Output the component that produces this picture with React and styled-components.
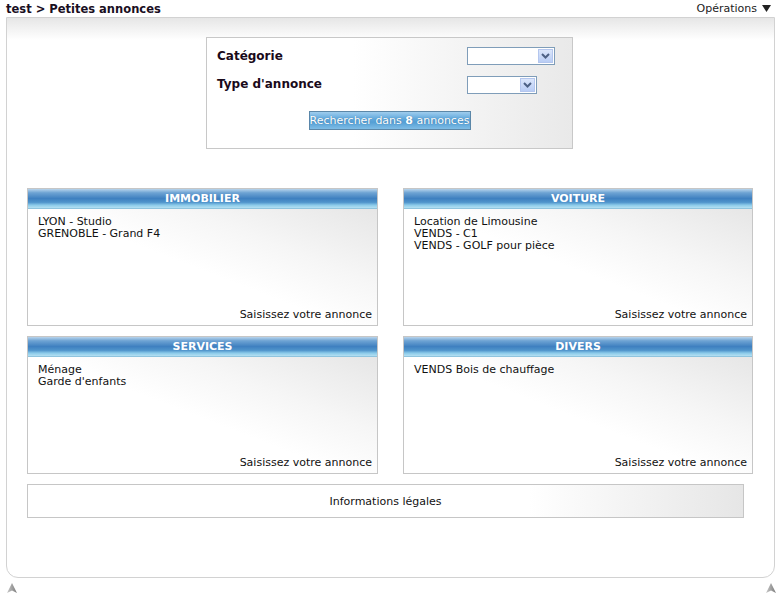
import * as React from "react";
import styled, { createGlobalStyle } from "styled-components";

const GlobalStyle = createGlobalStyle`
  html, body {
    margin: 0;
    padding: 0;
    background: #fff;
  }
  body {
    font-family: "DejaVu Sans", Verdana, sans-serif;
    font-size: 11px;
    color: #000;
  }
`

const Page = styled.div`
  width: 781px;
  height: 599px;
  position: relative;
  overflow: hidden;
`

const TitleBar = styled.div`
  height: 17px;
  display: flex;
  align-items: center;
  justify-content: space-between;
  padding: 0 10px 0 6px;
`

const Breadcrumb = styled.div`
  font-weight: bold;
  font-size: 11.5px;
  color: #1a0f1f;
`

const Operations = styled.div`
  font-size: 11px;
  color: #222;
  display: flex;
  align-items: center;
  gap: 5px;

  svg {
    display: block;
  }
`

const Frame = styled.div`
  margin: 0 6px 0 6px;
  height: 561px;
  box-sizing: border-box;
  border: 1px solid #d2d2d2;
  border-radius: 0 0 12px 12px;
  background: linear-gradient(to bottom, #e6e6e6 0px, #ffffff 22px);
  padding: 19px 21px 0 20px;
`

const SearchBox = styled.div`
  width: 367px;
  height: 112px;
  box-sizing: border-box;
  margin: 0 0 39px 179px;
  border: 1px solid #c8c8c8;
  background: linear-gradient(to right, #ffffff 40%, #e9e9e9 100%);
  padding: 8px 10px 0 10px;
  display: flex;
  flex-direction: column;
`

const FieldRow = styled.div`
  display: flex;
  align-items: center;
  justify-content: space-between;
  height: 19px;
  margin-bottom: ${p => p.$gap}px;
  padding-right: ${p => p.$pr}px;
`

const Label = styled.span`
  font-weight: bold;
  font-size: 12px;
  color: #1a0a1a;
`

const Select = styled.div`
  width: ${p => p.$w}px;
  height: 18px;
  box-sizing: border-box;
  border: 1px solid #7f9db9;
  background: #fff;
  display: flex;
  justify-content: flex-end;
  padding: 1px;
  margin-top: ${p => p.$mt || 0}px;
`

const SelectArrow = styled.div`
  width: 15px;
  height: 14px;
  background: linear-gradient(to bottom, #dbe6fb, #b9cdf5);
  border: 1px solid #b4c6ee;
  box-sizing: border-box;
  display: flex;
  align-items: center;
  justify-content: center;
`

const SearchButton = styled.button`
  align-self: center;
  margin-top: 18px;
  width: 162px;
  height: 19px;
  box-sizing: border-box;
  padding: 0;
  border: 1px solid #5b87a8;
  background: linear-gradient(to bottom, #9fcdee 0%, #62a9dc 40%, #559fd5 60%, #7fbde6 100%);
  color: #fff;
  font-family: "DejaVu Sans", Verdana, sans-serif;
  font-size: 11px;
  text-shadow: 0 0 1px #3a6f99;
  white-space: nowrap;

  b {
    font-weight: bold;
  }
`

const Grid = styled.div`
  display: grid;
  grid-template-columns: 351px 350px;
  column-gap: 25px;
  row-gap: 10px;
`

const Panel = styled.div`
  height: 138px;
  box-sizing: border-box;
  border: 1px solid #c6c6c6;
  display: flex;
  flex-direction: column;
  background: linear-gradient(to bottom left, #e2e2e2 0%, #f6f6f6 35%, #ffffff 55%);
`

const PanelHeader = styled.div`
  height: 20px;
  box-sizing: border-box;
  border-bottom: 1px solid #8fc4de;
  background: linear-gradient(
    to bottom,
    #b8d4ec 0%,
    #6ea3d3 20%,
    #3f80c0 50%,
    #4f94cb 70%,
    #8ccbea 85%,
    #b4e0f2 100%
  );
  color: #fff;
  font-weight: bold;
  font-size: 11px;
  text-align: center;
  line-height: 19px;
  text-transform: uppercase;
`

const PanelBody = styled.div`
  flex: 1;
  display: flex;
  flex-direction: column;
  justify-content: space-between;
  padding: 7px 5px 4px 10px;
`

const ItemList = styled.div`
  display: flex;
  flex-direction: column;
  line-height: 12px;
  color: #111;
`

const PanelLink = styled.div`
  text-align: right;
  color: #111;
`

const Legal = styled.div`
  margin-top: 10px;
  width: 717px;
  height: 34px;
  box-sizing: border-box;
  border: 1px solid #c6c6c6;
  background: linear-gradient(to right, #ffffff 70%, #e6e6e6 100%);
  display: flex;
  align-items: center;
  justify-content: center;
  color: #111;
`

const CornerArrow = styled.div`
  position: absolute;
  bottom: 6px;
  ${p => (p.$right ? "right: 5px;" : "left: 7px;")}
  svg {
    display: block;
  }
`

function Chevron() {
  return (
    <svg width="9" height="6" viewBox="0 0 9 6">
      <path d="M1 1 L4.5 4.5 L8 1" fill="none" stroke="#4d6185" strokeWidth="2" />
    </svg>
  );
}

function Arrow() {
  return (
    <svg width="10" height="10" viewBox="0 0 10 10">
      <defs>
        <linearGradient id="ag" x1="0" x2="1">
          <stop offset="0" stopColor="#c8c8c8" />
          <stop offset="1" stopColor="#7a7a7a" />
        </linearGradient>
      </defs>
      <path d="M5 0 L10 10 L5 7.5 L0 10 Z" fill="url(#ag)" />
    </svg>
  );
}

const categories = [
  { title: "Immobilier", items: ["LYON - Studio", "GRENOBLE - Grand F4"] },
  { title: "Voiture", items: ["Location de Limousine", "VENDS - C1", "VENDS - GOLF pour pièce"] },
  { title: "Services", items: ["Ménage", "Garde d'enfants"] },
  { title: "Divers", items: ["VENDS Bois de chauffage"] },
];

export default function App() {
  return (
    <Page>
      <GlobalStyle />
      <TitleBar>
        <Breadcrumb>test &gt; Petites annonces</Breadcrumb>
        <Operations>
          Opérations
          <svg width="9" height="7" viewBox="0 0 9 7">
            <path d="M0 0 H9 L4.5 7 Z" fill="#222" />
          </svg>
        </Operations>
      </TitleBar>
      <Frame>
        <SearchBox>
          <FieldRow $gap={9} $pr={7}>
            <Label>Catégorie</Label>
            <Select $w={88}>
              <SelectArrow><Chevron /></SelectArrow>
            </Select>
          </FieldRow>
          <FieldRow $gap={0} $pr={25}>
            <Label>Type d'annonce</Label>
            <Select $w={70} $mt={2}>
              <SelectArrow><Chevron /></SelectArrow>
            </Select>
          </FieldRow>
          <SearchButton>Rechercher dans <b>8</b> annonces</SearchButton>
        </SearchBox>
        <Grid>
          {categories.map(cat => (
            <Panel key={cat.title}>
              <PanelHeader>{cat.title}</PanelHeader>
              <PanelBody>
                <ItemList>
                  {cat.items.map(it => (
                    <span key={it}>{it}</span>
                  ))}
                </ItemList>
                <PanelLink>Saisissez votre annonce</PanelLink>
              </PanelBody>
            </Panel>
          ))}
        </Grid>
        <Legal>Informations légales</Legal>
      </Frame>
      <CornerArrow><Arrow /></CornerArrow>
      <CornerArrow $right><Arrow /></CornerArrow>
    </Page>
  );
}
